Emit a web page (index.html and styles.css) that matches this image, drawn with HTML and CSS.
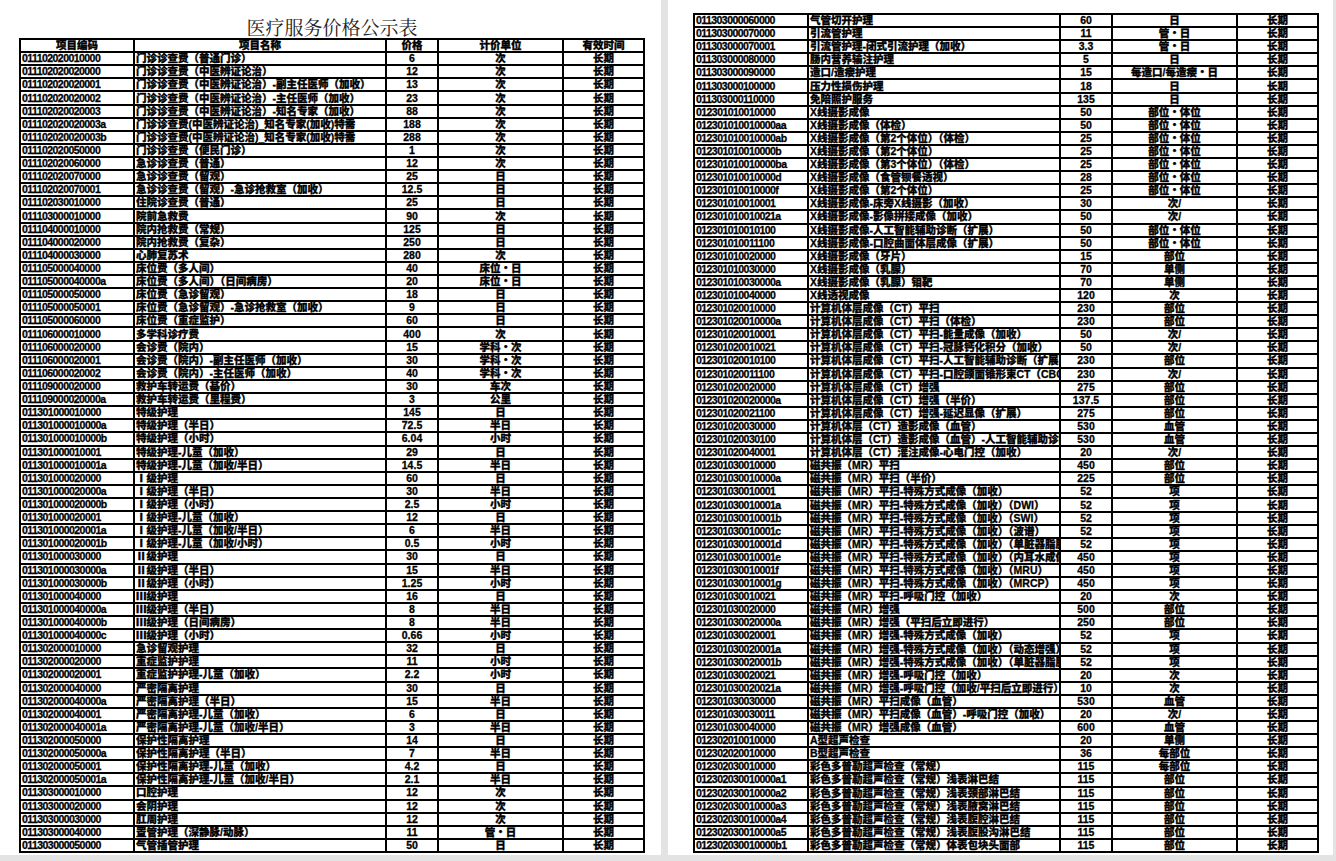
FILE: index.html
```html
<!DOCTYPE html>
<html lang="zh-CN">
<head>
<meta charset="utf-8">
<title>医疗服务价格公示表</title>
<link rel="stylesheet" href="styles.css">
</head>
<body>
<div class="viewer">
<div class="page page-left">
<div class="title">医疗服务价格公示表</div>
<div class="sheet sheet-left">
<div>项目编码</div><div>项目名称</div><div>价格</div><div>计价单位</div><div>有效时间</div>
<div>011102020010000</div><div>门诊诊查费（普通门诊）</div><div>6</div><div>次</div><div>长期</div>
<div>011102020020000</div><div>门诊诊查费（中医辨证论治）</div><div>12</div><div>次</div><div>长期</div>
<div>011102020020001</div><div>门诊诊查费（中医辨证论治）-副主任医师（加收）</div><div>13</div><div>次</div><div>长期</div>
<div>011102020020002</div><div>门诊诊查费（中医辨证论治）-主任医师（加收）</div><div>23</div><div>次</div><div>长期</div>
<div>011102020020003</div><div>门诊诊查费（中医辨证论治）-知名专家（加收）</div><div>88</div><div>次</div><div>长期</div>
<div>011102020020003a</div><div>门诊诊查费(中医辨证论治)_知名专家(加收)特需</div><div>188</div><div>次</div><div>长期</div>
<div>011102020020003b</div><div>门诊诊查费(中医辨证论治)_知名专家(加收)特需</div><div>288</div><div>次</div><div>长期</div>
<div>011102020050000</div><div>门诊诊查费（便民门诊）</div><div>1</div><div>次</div><div>长期</div>
<div>011102020060000</div><div>急诊诊查费（普通）</div><div>12</div><div>次</div><div>长期</div>
<div>011102020070000</div><div>急诊诊查费（留观）</div><div>25</div><div>日</div><div>长期</div>
<div>011102020070001</div><div>急诊诊查费（留观）-急诊抢救室（加收）</div><div>12.5</div><div>日</div><div>长期</div>
<div>011102030010000</div><div>住院诊查费（普通）</div><div>25</div><div>日</div><div>长期</div>
<div>011103000010000</div><div>院前急救费</div><div>90</div><div>次</div><div>长期</div>
<div>011104000010000</div><div>院内抢救费（常规）</div><div>125</div><div>日</div><div>长期</div>
<div>011104000020000</div><div>院内抢救费（复杂）</div><div>250</div><div>日</div><div>长期</div>
<div>011104000030000</div><div>心肺复苏术</div><div>280</div><div>次</div><div>长期</div>
<div>011105000040000</div><div>床位费（多人间）</div><div>40</div><div>床位・日</div><div>长期</div>
<div>011105000040000a</div><div>床位费（多人间）（日间病房）</div><div>20</div><div>床位・日</div><div>长期</div>
<div>011105000050000</div><div>床位费（急诊留观）</div><div>18</div><div>日</div><div>长期</div>
<div>011105000050001</div><div>床位费（急诊留观）-急诊抢救室（加收）</div><div>9</div><div>日</div><div>长期</div>
<div>011105000060000</div><div>床位费（重症监护）</div><div>60</div><div>日</div><div>长期</div>
<div>011106000010000</div><div>多学科诊疗费</div><div>400</div><div>次</div><div>长期</div>
<div>011106000020000</div><div>会诊费（院内）</div><div>15</div><div>学科・次</div><div>长期</div>
<div>011106000020001</div><div>会诊费（院内）-副主任医师（加收）</div><div>30</div><div>学科・次</div><div>长期</div>
<div>011106000020002</div><div>会诊费（院内）-主任医师（加收）</div><div>40</div><div>学科・次</div><div>长期</div>
<div>011109000020000</div><div>救护车转运费（基价）</div><div>30</div><div>车次</div><div>长期</div>
<div>011109000020000a</div><div>救护车转运费（里程费）</div><div>3</div><div>公里</div><div>长期</div>
<div>011301000010000</div><div>特级护理</div><div>145</div><div>日</div><div>长期</div>
<div>011301000010000a</div><div>特级护理（半日）</div><div>72.5</div><div>半日</div><div>长期</div>
<div>011301000010000b</div><div>特级护理（小时）</div><div>6.04</div><div>小时</div><div>长期</div>
<div>011301000010001</div><div>特级护理-儿童（加收）</div><div>29</div><div>日</div><div>长期</div>
<div>011301000010001a</div><div>特级护理-儿童（加收/半日）</div><div>14.5</div><div>半日</div><div>长期</div>
<div>011301000020000</div><div>Ⅰ级护理</div><div>60</div><div>日</div><div>长期</div>
<div>011301000020000a</div><div>Ⅰ级护理（半日）</div><div>30</div><div>半日</div><div>长期</div>
<div>011301000020000b</div><div>Ⅰ级护理（小时）</div><div>2.5</div><div>小时</div><div>长期</div>
<div>011301000020001</div><div>Ⅰ级护理-儿童（加收）</div><div>12</div><div>日</div><div>长期</div>
<div>011301000020001a</div><div>Ⅰ级护理-儿童（加收/半日）</div><div>6</div><div>半日</div><div>长期</div>
<div>011301000020001b</div><div>Ⅰ级护理-儿童（加收/小时）</div><div>0.5</div><div>小时</div><div>长期</div>
<div>011301000030000</div><div>Ⅱ级护理</div><div>30</div><div>日</div><div>长期</div>
<div>011301000030000a</div><div>Ⅱ级护理（半日）</div><div>15</div><div>半日</div><div>长期</div>
<div>011301000030000b</div><div>Ⅱ级护理（小时）</div><div>1.25</div><div>小时</div><div>长期</div>
<div>011301000040000</div><div>Ⅲ级护理</div><div>16</div><div>日</div><div>长期</div>
<div>011301000040000a</div><div>Ⅲ级护理（半日）</div><div>8</div><div>半日</div><div>长期</div>
<div>011301000040000b</div><div>Ⅲ级护理（日间病房）</div><div>8</div><div>半日</div><div>长期</div>
<div>011301000040000c</div><div>Ⅲ级护理（小时）</div><div>0.66</div><div>小时</div><div>长期</div>
<div>011302000010000</div><div>急诊留观护理</div><div>32</div><div>日</div><div>长期</div>
<div>011302000020000</div><div>重症监护护理</div><div>11</div><div>小时</div><div>长期</div>
<div>011302000020001</div><div>重症监护护理-儿童（加收）</div><div>2.2</div><div>小时</div><div>长期</div>
<div>011302000040000</div><div>严密隔离护理</div><div>30</div><div>日</div><div>长期</div>
<div>011302000040000a</div><div>严密隔离护理（半日）</div><div>15</div><div>半日</div><div>长期</div>
<div>011302000040001</div><div>严密隔离护理-儿童（加收）</div><div>6</div><div>日</div><div>长期</div>
<div>011302000040001a</div><div>严密隔离护理-儿童（加收/半日）</div><div>3</div><div>半日</div><div>长期</div>
<div>011302000050000</div><div>保护性隔离护理</div><div>14</div><div>日</div><div>长期</div>
<div>011302000050000a</div><div>保护性隔离护理（半日）</div><div>7</div><div>半日</div><div>长期</div>
<div>011302000050001</div><div>保护性隔离护理-儿童（加收）</div><div>4.2</div><div>日</div><div>长期</div>
<div>011302000050001a</div><div>保护性隔离护理-儿童（加收/半日）</div><div>2.1</div><div>半日</div><div>长期</div>
<div>011303000010000</div><div>口腔护理</div><div>12</div><div>次</div><div>长期</div>
<div>011303000020000</div><div>会阴护理</div><div>12</div><div>次</div><div>长期</div>
<div>011303000030000</div><div>肛周护理</div><div>12</div><div>次</div><div>长期</div>
<div>011303000040000</div><div>置管护理（深静脉/动脉）</div><div>11</div><div>管・日</div><div>长期</div>
<div>011303000050000</div><div>气管插管护理</div><div>50</div><div>日</div><div>长期</div>
</div>
</div>
<div class="page page-right">
<div class="sheet sheet-right">
<div>011303000060000</div><div>气管切开护理</div><div>60</div><div>日</div><div>长期</div>
<div>011303000070000</div><div>引流管护理</div><div>11</div><div>管・日</div><div>长期</div>
<div>011303000070001</div><div>引流管护理-闭式引流护理（加收）</div><div>3.3</div><div>管・日</div><div>长期</div>
<div>011303000080000</div><div>肠内营养输注护理</div><div>5</div><div>日</div><div>长期</div>
<div>011303000090000</div><div>造口/造瘘护理</div><div>15</div><div>每造口/每造瘘・日</div><div>长期</div>
<div>011303000100000</div><div>压力性损伤护理</div><div>18</div><div>日</div><div>长期</div>
<div>011303000110000</div><div>免陪照护服务</div><div>135</div><div>日</div><div>长期</div>
<div>012301010010000</div><div>X线摄影成像</div><div>50</div><div>部位・体位</div><div>长期</div>
<div>012301010010000aa</div><div>X线摄影成像（体检）</div><div>50</div><div>部位・体位</div><div>长期</div>
<div>012301010010000ab</div><div>X线摄影成像（第2个体位）（体检）</div><div>25</div><div>部位・体位</div><div>长期</div>
<div>012301010010000b</div><div>X线摄影成像（第2个体位）</div><div>25</div><div>部位・体位</div><div>长期</div>
<div>012301010010000ba</div><div>X线摄影成像（第3个体位）（体检）</div><div>25</div><div>部位・体位</div><div>长期</div>
<div>012301010010000d</div><div>X线摄影成像（食管钡餐透视）</div><div>28</div><div>部位・体位</div><div>长期</div>
<div>012301010010000f</div><div>X线摄影成像（第2个体位）</div><div>25</div><div>部位・体位</div><div>长期</div>
<div>012301010010001</div><div>X线摄影成像-床旁X线摄影（加收）</div><div>30</div><div>次/</div><div>长期</div>
<div>012301010010021a</div><div>X线摄影成像-影像拼接成像（加收）</div><div>50</div><div>次/</div><div>长期</div>
<div>012301010010100</div><div>X线摄影成像-人工智能辅助诊断（扩展）</div><div>50</div><div>部位・体位</div><div>长期</div>
<div>012301010011100</div><div>X线摄影成像-口腔曲面体层成像（扩展）</div><div>50</div><div>部位・体位</div><div>长期</div>
<div>012301010020000</div><div>X线摄影成像（牙片）</div><div>15</div><div>部位</div><div>长期</div>
<div>012301010030000</div><div>X线摄影成像（乳腺）</div><div>70</div><div>单侧</div><div>长期</div>
<div>012301010030000a</div><div>X线摄影成像（乳腺）钼靶</div><div>70</div><div>单侧</div><div>长期</div>
<div>012301010040000</div><div>X线透视成像</div><div>120</div><div>次</div><div>长期</div>
<div>012301020010000</div><div>计算机体层成像（CT）平扫</div><div>230</div><div>部位</div><div>长期</div>
<div>012301020010000a</div><div>计算机体层成像（CT）平扫（体检）</div><div>230</div><div>部位</div><div>长期</div>
<div>012301020010001</div><div>计算机体层成像（CT）平扫-能量成像（加收）</div><div>50</div><div>次/</div><div>长期</div>
<div>012301020010021</div><div>计算机体层成像（CT）平扫-冠脉钙化积分（加收）</div><div>50</div><div>次/</div><div>长期</div>
<div>012301020010100</div><div>计算机体层成像（CT）平扫-人工智能辅助诊断（扩展）</div><div>230</div><div>部位</div><div>长期</div>
<div>012301020011100</div><div>计算机体层成像（CT）平扫-口腔颌面锥形束CT（CBCT）</div><div>230</div><div>次/</div><div>长期</div>
<div>012301020020000</div><div>计算机体层成像（CT）增强</div><div>275</div><div>部位</div><div>长期</div>
<div>012301020020000a</div><div>计算机体层成像（CT）增强（半价）</div><div>137.5</div><div>部位</div><div>长期</div>
<div>012301020021100</div><div>计算机体层成像（CT）增强-延迟显像（扩展）</div><div>275</div><div>部位</div><div>长期</div>
<div>012301020030000</div><div>计算机体层（CT）造影成像（血管）</div><div>530</div><div>血管</div><div>长期</div>
<div>012301020030100</div><div>计算机体层（CT）造影成像（血管）-人工智能辅助诊断（扩展）</div><div>530</div><div>血管</div><div>长期</div>
<div>012301020040001</div><div>计算机体层（CT）灌注成像-心电门控（加收）</div><div>20</div><div>次/</div><div>长期</div>
<div>012301030010000</div><div>磁共振（MR）平扫</div><div>450</div><div>部位</div><div>长期</div>
<div>012301030010000a</div><div>磁共振（MR）平扫（半价）</div><div>225</div><div>部位</div><div>长期</div>
<div>012301030010001</div><div>磁共振（MR）平扫-特殊方式成像（加收）</div><div>52</div><div>项</div><div>长期</div>
<div>012301030010001a</div><div>磁共振（MR）平扫-特殊方式成像（加收）（DWI）</div><div>52</div><div>项</div><div>长期</div>
<div>012301030010001b</div><div>磁共振（MR）平扫-特殊方式成像（加收）（SWI）</div><div>52</div><div>项</div><div>长期</div>
<div>012301030010001c</div><div>磁共振（MR）平扫-特殊方式成像（加收）（波谱）</div><div>52</div><div>项</div><div>长期</div>
<div>012301030010001d</div><div>磁共振（MR）平扫-特殊方式成像（加收）（单脏器脂肪定量）</div><div>52</div><div>项</div><div>长期</div>
<div>012301030010001e</div><div>磁共振（MR）平扫-特殊方式成像（加收）（内耳水成像）</div><div>450</div><div>项</div><div>长期</div>
<div>012301030010001f</div><div>磁共振（MR）平扫-特殊方式成像（加收）（MRU）</div><div>450</div><div>项</div><div>长期</div>
<div>012301030010001g</div><div>磁共振（MR）平扫-特殊方式成像（加收）（MRCP）</div><div>450</div><div>项</div><div>长期</div>
<div>012301030010021</div><div>磁共振（MR）平扫-呼吸门控（加收）</div><div>20</div><div>次</div><div>长期</div>
<div>012301030020000</div><div>磁共振（MR）增强</div><div>500</div><div>部位</div><div>长期</div>
<div>012301030020000a</div><div>磁共振（MR）增强（平扫后立即进行）</div><div>250</div><div>部位</div><div>长期</div>
<div>012301030020001</div><div>磁共振（MR）增强-特殊方式成像（加收）</div><div>52</div><div>项</div><div>长期</div>
<div>012301030020001a</div><div>磁共振（MR）增强-特殊方式成像（加收）（动态增强）</div><div>52</div><div>项</div><div>长期</div>
<div>012301030020001b</div><div>磁共振（MR）增强-特殊方式成像（加收）（单脏器脂肪定量）</div><div>52</div><div>项</div><div>长期</div>
<div>012301030020021</div><div>磁共振（MR）增强-呼吸门控（加收）</div><div>20</div><div>次</div><div>长期</div>
<div>012301030020021a</div><div>磁共振（MR）增强-呼吸门控（加收/平扫后立即进行）</div><div>10</div><div>次</div><div>长期</div>
<div>012301030030000</div><div>磁共振（MR）平扫成像（血管）</div><div>530</div><div>血管</div><div>长期</div>
<div>012301030030011</div><div>磁共振（MR）平扫成像（血管）-呼吸门控（加收）</div><div>20</div><div>次/</div><div>长期</div>
<div>012301030040000</div><div>磁共振（MR）增强成像（血管）</div><div>600</div><div>血管</div><div>长期</div>
<div>012302010010000</div><div>A型超声检查</div><div>20</div><div>单侧</div><div>长期</div>
<div>012302020010000</div><div>B型超声检查</div><div>36</div><div>每部位</div><div>长期</div>
<div>012302030010000</div><div>彩色多普勒超声检查（常规）</div><div>115</div><div>每部位</div><div>长期</div>
<div>012302030010000a1</div><div>彩色多普勒超声检查（常规）浅表淋巴结</div><div>115</div><div>部位</div><div>长期</div>
<div>012302030010000a2</div><div>彩色多普勒超声检查（常规）浅表颈部淋巴结</div><div>115</div><div>部位</div><div>长期</div>
<div>012302030010000a3</div><div>彩色多普勒超声检查（常规）浅表腋窝淋巴结</div><div>115</div><div>部位</div><div>长期</div>
<div>012302030010000a4</div><div>彩色多普勒超声检查（常规）浅表腹腔淋巴结</div><div>115</div><div>部位</div><div>长期</div>
<div>012302030010000a5</div><div>彩色多普勒超声检查（常规）浅表腹股沟淋巴结</div><div>115</div><div>部位</div><div>长期</div>
<div>012302030010000b1</div><div>彩色多普勒超声检查（常规）体表包块头面部</div><div>115</div><div>部位</div><div>长期</div>
</div>
</div>
</div>
</body>
</html>
```

FILE: styles.css
```css
html, body {
  margin: 0;
  padding: 0;
}
body {
  width: 1336px;
  height: 861px;
  overflow: hidden;
  background: #e3e3e3;
  font-family: "Liberation Sans", "Noto Sans CJK SC", sans-serif;
  color: #000;
}
.viewer {
  display: flex;
  gap: 7px;
  height: 855px;
}
.page {
  background: #fff;
  height: 855px;
}
.page-left {
  width: 661px;
}
.page-right {
  width: 665px;
}
.title {
  margin: 15px 0 0 19px;
  width: 626px;
  height: 23px;
  line-height: 23px;
  text-align: center;
  font-size: 19px;
  font-weight: 400;
  font-family: "Noto Serif CJK SC", "Noto Sans CJK SC", serif;
  color: #222;
}
.sheet {
  display: grid;
  grid-template-columns: 112px 250px 50px 123px 79px;
  gap: 2px;
  padding: 2px;
  background: #000;
  width: 626px;
  box-sizing: border-box;
}
.sheet-left {
  margin-left: 19px;
  height: 815px;
  grid-template-rows: repeat(62, 1fr);
}
.sheet-right {
  margin-left: 25px;
  margin-top: 13px;
  height: 840px;
  grid-template-rows: repeat(64, 1fr);
}
.sheet > div {
  background: #fff;
  display: flex;
  align-items: center;
  justify-content: center;
  white-space: nowrap;
  overflow: hidden;
  min-width: 0;
  min-height: 0;
  font-weight: 900;
  font-size: 10.5px;
  line-height: 11px;
  -webkit-text-stroke: 0.3px #000;
}
.sheet > div:nth-child(5n+1) {
  justify-content: flex-start;
  padding-left: 1px;
  letter-spacing: -0.55px;
}
.sheet > div:nth-child(5n+2) {
  justify-content: flex-start;
  padding-left: 1px;
}
.sheet-left > div:nth-child(-n+5) {
  justify-content: center;
  letter-spacing: 0;
  padding-left: 0;
}
```
